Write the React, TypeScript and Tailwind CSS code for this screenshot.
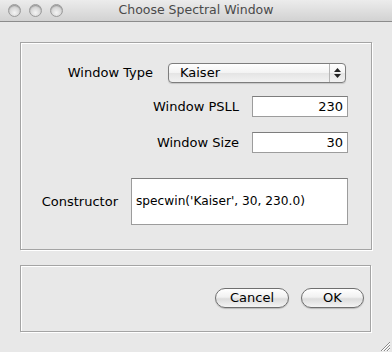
const font = { fontFamily: '"DejaVu Sans", "Liberation Sans", sans-serif' };

function Light() {
  return (
    <div className="h-[13px] w-[13px] rounded-full border border-[#9a9a9a] bg-[radial-gradient(circle_at_50%_70%,#f4f4f4_0%,#d6d6d6_55%,#b9b9b9_100%)] shadow-[inset_0_1px_1px_rgba(0,0,0,0.25)]" />
  );
}

function TextField({ value, className }: { value: string; className: string }) {
  return (
    <div className={`flex items-center border border-[#9c9c9c] border-t-[#7d7d7d] bg-white text-black ${className}`}>
      {value}
    </div>
  );
}

function PillButton({ label, width }: { label: string; width: string }) {
  return (
    <button className={`flex h-[20px] ${width} items-center justify-center rounded-full border border-[#6f6f6f] bg-[linear-gradient(#ffffff,#f1f1f1_45%,#dcdcdc_55%,#f4f4f4)] text-[13px] text-black shadow-[0_1px_1px_rgba(0,0,0,0.2)]`}>
      {label}
    </button>
  );
}

export default function App() {
  return (
    <div className="h-[352px] w-[392px] overflow-hidden bg-[#e8e8e8] select-none" style={font}>
      {/* title bar */}
      <div className="relative flex h-[22px] items-center border-b border-[#8c8c8c] bg-[linear-gradient(#ececec,#d2d2d2)]">
        <div className="flex gap-[8px] pl-[8px]">
          <Light />
          <Light />
          <Light />
        </div>
        <div className="absolute inset-0 flex items-center justify-center text-[12.5px] text-[#4a4a4a]">
          Choose Spectral Window
        </div>
      </div>

      <div className="px-[20px]">
        {/* upper group */}
        <div className="mt-[20px] h-[208px] w-[352px] border border-[#a4a4a4] shadow-[inset_1px_1px_0_#fff,1px_1px_0_#fff]">
          <div className="mt-[20px] flex items-center justify-end pr-[25px]">
            <span className="text-[13px] text-black">Window Type</span>
            <div className="ml-[15px] flex h-[20px] w-[178px] items-center rounded-[4px] border border-[#7d7d7d] bg-[linear-gradient(#ffffff,#f3f3f3_50%,#e4e4e4_51%,#f2f2f2)] shadow-[0_1px_1px_rgba(0,0,0,0.15)]">
              <span className="flex-1 pl-[11px] text-[13px] text-black">Kaiser</span>
              <div className="flex h-full w-[16px] flex-col items-center justify-center gap-[2px] border-l border-[#b5b5b5]">
                <svg width="7" height="4" viewBox="0 0 7 4"><path d="M3.5 0 L7 4 L0 4 Z" fill="#222" /></svg>
                <svg width="7" height="4" viewBox="0 0 7 4"><path d="M0 0 L7 0 L3.5 4 Z" fill="#222" /></svg>
              </div>
            </div>
          </div>

          <div className="mt-[13px] flex items-center justify-end pr-[23px]">
            <span className="text-[13px] text-black">Window PSLL</span>
            <TextField value="230" className="ml-[13px] h-[21px] w-[96px] justify-end pr-[4px] text-[13px]" />
          </div>

          <div className="mt-[15px] flex items-center justify-end pr-[23px]">
            <span className="text-[13px] text-black">Window Size</span>
            <TextField value="30" className="ml-[13px] h-[21px] w-[96px] justify-end pr-[4px] text-[13px]" />
          </div>

          <div className="mt-[25px] flex items-center justify-end pr-[23px]">
            <span className="text-[13px] text-black">Constructor</span>
            <TextField value="specwin('Kaiser', 30, 230.0)" className="ml-[13px] h-[47px] w-[217px] pl-[4px] text-[12.2px]" />
          </div>
        </div>

        {/* lower group */}
        <div className="mt-[15px] flex h-[67px] w-[351px] items-start justify-end gap-[12px] border border-[#a4a4a4] pr-[6px] pt-[22px] shadow-[inset_1px_1px_0_#fff,1px_1px_0_#fff]">
          <PillButton label="Cancel" width="w-[74px]" />
          <PillButton label="OK" width="w-[63px]" />
        </div>
      </div>

      {/* resize grip */}
      <div className="flex justify-end pr-[2px] pt-[9px]">
        <svg width="10" height="10" viewBox="0 0 10 10">
          <path d="M10 1 L1 10 M10 4 L4 10 M10 7 L7 10" stroke="#8a8a8a" strokeWidth="1" />
          <path d="M10 2 L2 10 M10 5 L5 10 M10 8 L8 10" stroke="#ffffff" strokeWidth="1" />
        </svg>
      </div>
    </div>
  );
}
